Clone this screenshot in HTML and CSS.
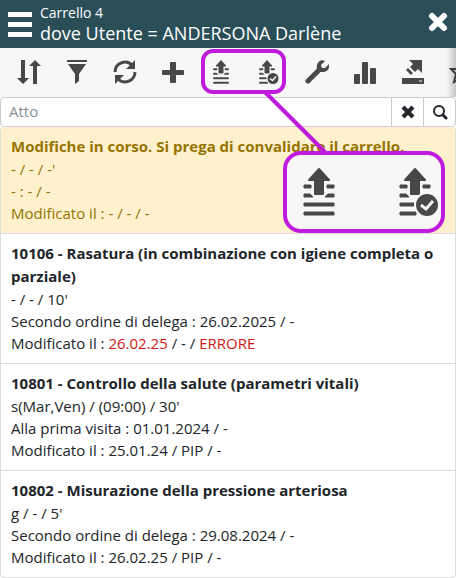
FILE: index.html
```html
<!DOCTYPE html>
<html lang="it">
<head>
  <meta charset="UTF-8" />
  <meta name="viewport" content="width=device-width, initial-scale=1.0"/>
  <title>Carrello 4</title>
  <link rel="stylesheet" href="styles.css">
</head>
<body>
  <!-- Shared icons -->
  <svg class="sprite" aria-hidden="true">
    <symbol id="send" viewBox="0 0 32 48">
      <path d="M16 1 26 12H20V26H12V12H6Z" stroke="#484848" stroke-width="2" stroke-linejoin="round"/>
      <path d="M1 17H8V20H1ZM24 17H31V20H24ZM1 26H7L10 29H1ZM25 26H31V29H22ZM1 35H31V38H1ZM1 44H31V47H1Z" stroke="#484848" stroke-linejoin="round"/>
    </symbol>
    <symbol id="send-check" viewBox="0 0 40 48">
      <path d="M16 1 26 12H20V26H12V12H6Z" stroke="#484848" stroke-width="2" stroke-linejoin="round"/>
      <path d="M1 17H8V20H1ZM24 17H31V20H24ZM1 26H7L10 29H1ZM1 35H15V38H1ZM1 44H17V47H1Z" stroke="#484848" stroke-linejoin="round"/>
      <circle cx="28" cy="37" r="13" fill="#f7f7f7"/>
      <circle cx="28" cy="37" r="11"/>
      <path d="M22 37 27 41 34 33" fill="none" stroke="#f7f7f7" stroke-width="3"/>
    </symbol>
  </svg>

  <header class="header">
    <button class="menu" aria-label="Menu"><span></span><span></span><span></span></button>
    <h1><small>Carrello 4</small>dove Utente = ANDERSONA Darlène</h1>
    <button class="close" aria-label="Chiudi">
      <svg width="20" height="20" viewBox="0 0 20 20"><path d="M4 4 16 16M16 4 4 16" stroke="#fff" stroke-width="6" stroke-linecap="round"/></svg>
    </button>
  </header>

  <nav class="toolbar">
    <button aria-label="Ordina">
      <svg width="24" height="24" viewBox="0 0 24 24"><path d="M4 0H8V18H12L6 24 0 18H4ZM16 24V6H12L18 0 24 6H20V24Z"/></svg>
    </button>
    <button aria-label="Filtra">
      <svg width="24" height="24" viewBox="0 0 24 24"><path d="M2 0H22V2H2ZM3 4H21L14 14V21L10 24V14Z"/></svg>
    </button>
    <button aria-label="Aggiorna">
      <svg width="24" height="24" viewBox="0 0 24 24"><path d="M2 12A10 10 0 0 1 19 5M22 12A10 10 0 0 1 5 19" fill="none" stroke="#484848" stroke-width="3"/><path d="M22 0V9H13ZM2 24V15H11Z"/></svg>
    </button>
    <button aria-label="Aggiungi">
      <svg width="24" height="24" viewBox="0 0 24 24"><path d="M10 2H14Q15 2 15 3V10H22Q23 10 23 11V14Q23 15 22 15H15V22Q15 23 14 23H10Q9 23 9 22V15H2Q1 15 1 14V11Q1 10 2 10H9V3Q9 2 10 2Z"/></svg>
    </button>
    <button aria-label="Convalida"><svg width="16" height="24"><use href="#send"/></svg></button>
    <button aria-label="Convalida tutto"><svg width="20" height="24"><use href="#send-check"/></svg></button>
    <button aria-label="Strumenti">
      <svg width="24" height="24" viewBox="0 0 24 24"><path d="M3 21 14 10" stroke="#484848" stroke-width="5" stroke-linecap="round"/><path d="M20 1 16 5 17 8 20 8 24 4C25 9 22 12 18 12 13 12 11 9 12 5 13 1 17-1 20 1Z"/></svg>
    </button>
    <button aria-label="Statistiche">
      <svg width="24" height="24" viewBox="0 0 24 24"><rect x="1" y="14" width="6" height="10" rx="1"/><rect x="9" y="2" width="6" height="22" rx="1"/><rect x="17" y="8" width="6" height="16" rx="1"/></svg>
    </button>
    <button aria-label="Esporta">
      <svg width="24" height="24" viewBox="0 0 24 24"><path d="M8 0H21V13L17 9 14 12 9 7 12 4ZM7 8 12 13 10 15 5 10Z"/><path d="M1 18H23V24H1Z"/><path d="M18 21H21" stroke="#f7f7f7"/></svg>
    </button>
    <button aria-label="Preferiti">
      <svg width="24" height="24" viewBox="0 0 24 24"><path d="M12 2 15 9 22 9 17 14 19 22 12 18 5 22 7 14 2 9 9 9Z" fill="none" stroke="#484848" stroke-width="2"/></svg>
    </button>
  </nav>

  <form class="search" onsubmit="event.preventDefault()">
    <input type="text" placeholder="Atto" aria-label="Atto" />
    <button type="reset" aria-label="Cancella">
      <svg width="14" height="14" viewBox="0 0 14 14"><path d="M2 2 12 12M12 2 2 12" stroke="#212529" stroke-width="4"/></svg>
    </button>
    <button type="submit" aria-label="Cerca">
      <svg width="16" height="16" viewBox="0 0 16 16"><circle cx="7" cy="7" r="5" fill="none" stroke="#212529" stroke-width="2"/><path d="M11 11 14 14" stroke="#212529" stroke-width="3" stroke-linecap="round"/></svg>
    </button>
  </form>

  <ul class="list">
    <li class="warning">
      <h2>Modifiche in corso. Si prega di convalidare il carrello.</h2>
      <p>- / - / -'</p>
      <p>- : - / -</p>
      <p>Modificato il : - / - / -</p>
    </li>
    <li>
      <h2>10106 - Rasatura (in combinazione con igiene completa o parziale)</h2>
      <p>- / - / 10'</p>
      <p>Secondo ordine di delega : 26.02.2025 / -</p>
      <p>Modificato il : <span class="error">26.02.25</span> / - / <span class="error">ERRORE</span></p>
    </li>
    <li>
      <h2>10801 - Controllo della salute (parametri vitali)</h2>
      <p>s(Mar,Ven) / (09:00) / 30'</p>
      <p>Alla prima visita : 01.01.2024 / -</p>
      <p>Modificato il : 25.01.24 / PIP / -</p>
    </li>
    <li>
      <h2>10802 - Misurazione della pressione arteriosa</h2>
      <p>g / - / 5'</p>
      <p>Secondo ordine di delega : 29.08.2024 / -</p>
      <p>Modificato il : 26.02.25 / PIP / -</p>
    </li>
  </ul>

  <!-- Magnified view of the two send buttons -->
  <div class="highlight"></div>
  <svg class="pointer" width="66" height="66" viewBox="0 0 66 66"><path d="M2 2 62 62" stroke="#bf1bdc" stroke-width="4"/></svg>
  <div class="callout">
    <svg width="32" height="48"><use href="#send"/></svg>
    <svg width="40" height="48"><use href="#send-check"/></svg>
  </div>
</body>
</html>
```
FILE: styles.css
```css
* {
  box-sizing: border-box;
}

body {
  position: relative;
  margin: 0;
  background: #fff;
  color: #212529;
  font-family: 'Open Sans', 'Noto Sans', sans-serif;
  font-size: 15px;
  line-height: 22px;
  overflow-x: hidden;
}

h1, h2, p, ul {
  margin: 0;
  padding: 0;
}

button {
  display: flex;
  align-items: center;
  justify-content: center;
  padding: 0;
  border: 0;
  background: none;
  cursor: pointer;
}

svg {
  display: block;
  fill: #484848;
}

.sprite {
  position: absolute;
  width: 0;
  height: 0;
}

/* Header */
.header {
  display: flex;
  height: 48px;
  padding: 0 8px;
  background: #2a4e58;
  color: #fff;
}

.menu {
  flex-direction: column;
  gap: 5px;
  width: 24px;
}

.menu span {
  width: 24px;
  height: 5px;
  background: #fff;
}

.header h1 {
  flex: 1;
  padding: 3px 0 0 8px;
  font-size: 18px;
  font-weight: 400;
  line-height: 20px;
}

.header small {
  display: block;
  font-size: 14px;
}

.close {
  height: 44px;
}

/* Toolbar */
.toolbar {
  position: relative;
  display: flex;
  height: 49px;
  padding: 0 0 1px 5px;
  background: #f7f7f7;
  overflow: hidden;
}

.toolbar button {
  flex: 0 0 48px;
}

.toolbar::after {
  content: "";
  position: absolute;
  top: 0;
  right: 0;
  width: 10px;
  height: 100%;
  background: linear-gradient(to right, rgba(0, 0, 0, 0), rgba(0, 0, 0, 0.2));
}

/* Search */
.search {
  display: flex;
  height: 30px;
  border: 1px solid #ccc;
  border-radius: 4px;
}

.search input {
  flex: 1;
  min-width: 0;
  padding: 0 8px 2px;
  border: 0;
  background: none;
  font: inherit;
}

.search button {
  width: 32px;
  border-left: 1px solid #ccc;
}

::placeholder {
  color: #868e96;
}

/* List */
.list {
  border: 1px solid #ddd;
  border-width: 0 1px;
  border-radius: 4px;
  list-style: none;
}

.list li {
  padding: 8px 10px 9px;
  border-bottom: 1px solid #ddd;
}

.list li:last-child {
  border-radius: 0 0 4px 4px;
}

.list h2 {
  font-size: 15px;
  font-weight: 700;
  line-height: 23px;
}

.list .warning {
  background: #fff1ce;
  color: #967400;
}

.error {
  color: #d01818;
}

/* Annotation */
.highlight, .callout {
  position: absolute;
  border: 4px solid #bf1bdc;
}

.highlight {
  top: 49px;
  left: 201px;
  width: 85px;
  height: 45px;
  border-radius: 12px;
}

.pointer {
  position: absolute;
  top: 90px;
  left: 263px;
}

.callout {
  top: 151px;
  left: 283px;
  display: flex;
  align-items: center;
  justify-content: space-between;
  width: 162px;
  height: 82px;
  padding: 0 2px 0 16px;
  border-radius: 18px;
  background: #f7f7f7;
}
```
